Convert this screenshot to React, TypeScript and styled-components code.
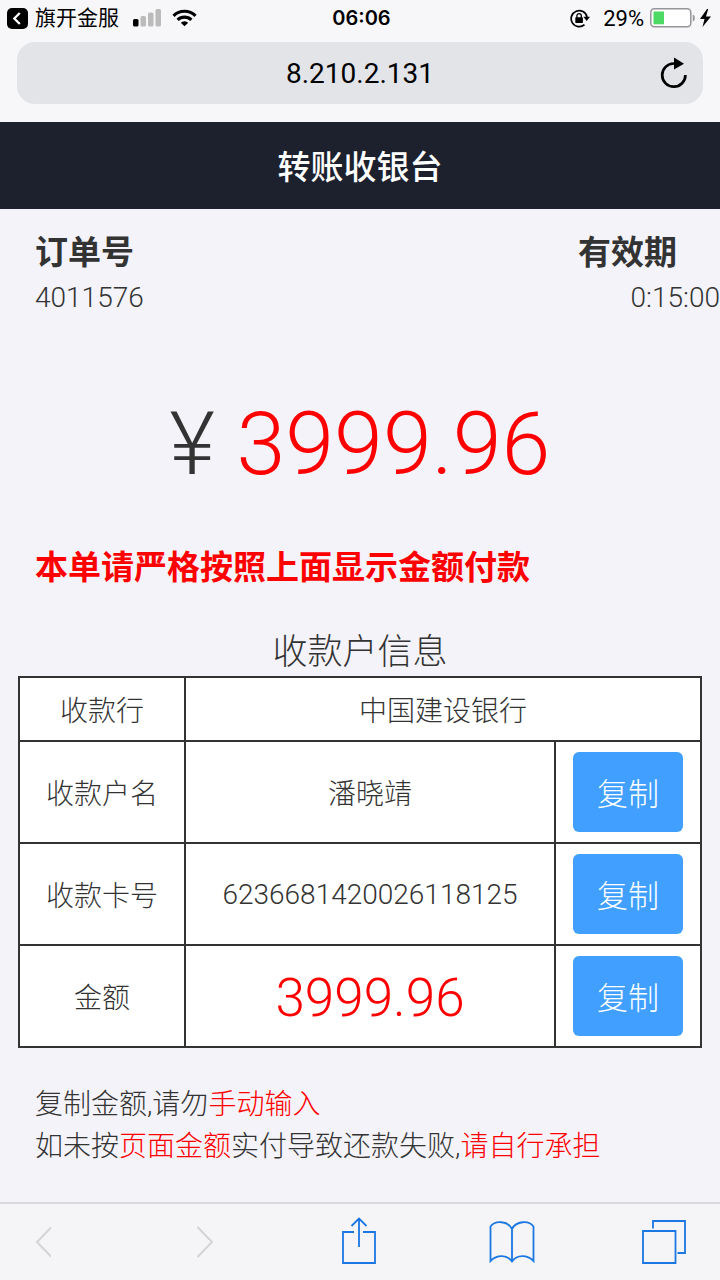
import React from "react";
import styled, { createGlobalStyle } from "styled-components";

const GlobalStyle = createGlobalStyle`
  * { box-sizing: border-box; }
  body {
    margin: 0;
    background: #f4f3f9;
    color: #333;
    font-family: Roboto, "Noto Sans CJK SC", sans-serif;
    font-weight: 300;
  }
  h1, h2, p, dl, dt, dd { margin: 0; }
`;

const Screen = styled.div`
  display: flex;
  flex-direction: column;
  min-height: 100vh;
`;

const BrowserTop = styled.div`
  background: #f7f7f9;
  padding-bottom: 18px;
`;

const StatusBar = styled.div`
  display: grid;
  grid-template-columns: 1fr auto 1fr;
  align-items: center;
  height: 36px;
  padding: 0 8px 0 7px;
  color: #000;
  font-size: 22px;
  font-weight: 400;
`;

const StatusGroup = styled.div<{ $end?: boolean }>`
  display: flex;
  align-items: center;
  justify-content: ${(p) => (p.$end ? "flex-end" : "flex-start")};
`;

const BackApp = styled.a`
  display: flex;
  align-items: center;
  gap: 7px;
  margin-right: 14px;
  color: #000;
  font-size: 21px;
  line-height: 36px;
  text-decoration: none;
`;

const Signal = styled.svg`
  margin-right: 10px;
`;

const Clock = styled.time`
  padding-left: 4px;
  font-family: Inter, sans-serif;
  font-size: 20px;
  font-weight: 600;
`;

const Battery = styled.span`
  margin: 0 6px 0 12px;
`;

const AddressBar = styled.div`
  display: grid;
  grid-template-columns: 44px 1fr 44px;
  align-items: center;
  height: 62px;
  margin: 6px 17px 0;
  padding: 0 7px;
  border-radius: 18px;
  background: #e3e4e8;
  color: #000;
  font-size: 28px;
  font-weight: 400;
  text-align: center;
`;

const IconButton = styled.button`
  display: flex;
  align-items: center;
  justify-content: center;
  padding: 0;
  border: 0;
  background: none;
  color: inherit;
`;

const TitleBar = styled.header`
  background: #1d212e;
  color: #fff;
  text-align: center;
`;

const Title = styled.h1`
  padding-top: 4px;
  font-size: 33px;
  font-weight: 500;
  line-height: 83px;
`;

const Content = styled.main`
  flex: 1;
`;

const OrderSummary = styled.dl`
  display: flex;
  justify-content: space-between;
  padding: 20px 0 0 35px;
`;

const SummaryItem = styled.div<{ $end?: boolean }>`
  text-align: ${(p) => (p.$end ? "right" : "left")};
  dt { padding-right: ${(p) => (p.$end ? "43px" : "0")}; }
`;

const SummaryLabel = styled.dt`
  font-size: 33px;
  font-weight: 700;
  line-height: 48px;
`;

const SummaryValue = styled.dd`
  font-size: 28px;
  line-height: 42px;
`;

const Amount = styled.p`
  margin-top: 70px;
  font-size: 88px;
  line-height: 110px;
  text-align: center;
`;

const Red = styled.span`
  color: #f00;
`;

const Notice = styled.p`
  margin: 45px 35px 0;
  color: #f00;
  font-size: 33px;
  font-weight: 700;
  line-height: 48px;
`;

const Payee = styled.table`
  width: calc(100% - 36px);
  margin: 37px 18px 0;
  border-collapse: collapse;
  table-layout: fixed;
  font-size: 28px;
  text-align: center;
`;

const PayeeCaption = styled.caption`
  font-size: 35px;
  line-height: 47px;
`;

const Row = styled.tr<{ $compact?: boolean }>`
  height: ${(p) => (p.$compact ? "64px" : "102px")};
  background: #fff;
`;

const Label = styled.th`
  padding: 0;
  border: 2px solid #333;
  font-weight: 300;
`;

const Cell = styled.td<{ $large?: boolean }>`
  padding: ${(p) => (p.$large ? "4px 0 0" : "0")};
  border: 2px solid #333;
  color: ${(p) => (p.$large ? "#f00" : "inherit")};
  font-size: ${(p) => (p.$large ? "53px" : "28px")};
`;

const CopyButton = styled.button`
  display: block;
  width: 110px;
  height: 80px;
  margin: 0 auto;
  padding: 0 0 2px;
  border: 0;
  border-radius: 6px;
  background: #409fff;
  color: #fff;
  font: inherit;
  font-size: 31px;
`;

const Hints = styled.div`
  padding: 36px 35px 32px;
  font-size: 28px;
  line-height: 42px;
`;

const Toolbar = styled.nav`
  display: flex;
  align-items: center;
  justify-content: space-between;
  height: 78px;
  padding: 0 33px 0 31px;
  border-top: 2px solid #dadadd;
  background: #f5f5f7;
  color: #1b77e2;
`;

const ToolButton = styled(IconButton)<{ $start?: boolean }>`
  width: 46px;
  justify-content: ${(p) => (p.$start ? "flex-start" : "center")};
`;

const rows = [
  { label: "收款户名", value: "潘晓靖" },
  { label: "收款卡号", value: "6236681420026118125" },
  { label: "金额", value: "3999.96", large: true },
];

export default function App() {
  return (
    <Screen>
      <GlobalStyle />
      <BrowserTop>
        <StatusBar>
          <StatusGroup>
            <BackApp href="#">
              <svg width="21" height="21" viewBox="0 0 21 21">
                <rect width="21" height="21" rx="5" fill="#000" />
                <path d="M12.8 5 7.3 10.500l5.500 5.500" fill="none" stroke="#fff" strokeWidth="2.300" />
              </svg>
              <span>旗开金服</span>
            </BackApp>
            <Signal width="29" height="18" viewBox="0 0 29 18">
              <rect x="0" y="10" width="5.500" height="7.500" rx="1.500" fill="#000" />
              <rect x="7.500" y="7" width="5.500" height="10.500" rx="1.500" fill="#bbb" />
              <rect x="15" y="3.500" width="5.500" height="14" rx="1.500" fill="#bbb" />
              <rect x="22.500" y="0" width="5.500" height="17.500" rx="1.500" fill="#bbb" />
            </Signal>
            <svg width="25" height="18" viewBox="0 0 25 18" fill="none" stroke="#000" strokeWidth="3.200">
              <path d="M1.500 6.800a15.600 15.600 0 0 1 22 0" />
              <path d="M5.600 10.900a9.800 9.800 0 0 1 13.800 0" />
              <path d="M12.500 17.300 8.800 13.700a5.300 5.300 0 0 1 7.400 0z" fill="#000" stroke="none" />
            </svg>
          </StatusGroup>
          <Clock>06:06</Clock>
          <StatusGroup $end>
            <svg width="21" height="19" viewBox="0 0 21 19" fill="none" stroke="#000">
              <path d="M17 8A8 8 0 1 0 14.500 15.600" strokeWidth="1.700" />
              <path d="M13.400 7.700h6.600l-3.300 4.300z" fill="#000" stroke="none" />
              <rect x="5.300" y="8.300" width="7.600" height="5.600" rx="0.600" fill="#000" stroke="none" />
              <path d="M6.900 9V6.800a2.200 2.200 0 0 1 4.400 0V9" strokeWidth="1.300" />
            </svg>
            <Battery>29%</Battery>
            <svg width="46" height="20" viewBox="0 0 46 20">
              <rect x="0.800" y="0.800" width="40" height="18" rx="3.500" fill="#fff" stroke="#96969a" strokeWidth="1.500" />
              <rect x="3.500" y="3.500" width="10.500" height="12.800" fill="#4cd964" />
              <path d="M42.800 6.500c2.700.5 2.700 6.500 0 7z" fill="#96969a" />
            </svg>
            <svg width="16" height="20" viewBox="0 0 16 20">
              <path d="M11 1 4 11h4.500L6.500 19 15 8.500h-5L12.200 1z" fill="#000" />
            </svg>
          </StatusGroup>
        </StatusBar>
        <AddressBar>
          <span />
          <span>8.210.2.131</span>
          <IconButton type="button" aria-label="刷新">
            <svg width="30" height="34" viewBox="0 0 30 34">
              <path d="M26.400 19A11.600 11.600 0 1 1 14.800 7.500H17" fill="none" stroke="#000" strokeWidth="2.700" />
              <path d="M15 1.500v12L25 7.700z" fill="#000" />
            </svg>
          </IconButton>
        </AddressBar>
      </BrowserTop>
      <TitleBar>
        <Title>转账收银台</Title>
      </TitleBar>
      <Content>
        <OrderSummary>
          <SummaryItem>
            <SummaryLabel>订单号</SummaryLabel>
            <SummaryValue>4011576</SummaryValue>
          </SummaryItem>
          <SummaryItem $end>
            <SummaryLabel>有效期</SummaryLabel>
            <SummaryValue>0:15:00</SummaryValue>
          </SummaryItem>
        </OrderSummary>
        <Amount>
          ¥ <Red>3999.96</Red>
        </Amount>
        <Notice>本单请严格按照上面显示金额付款</Notice>
        <Payee>
          <PayeeCaption>收款户信息</PayeeCaption>
          <colgroup>
            <col width="166" />
            <col />
            <col width="146" />
          </colgroup>
          <tbody>
            <Row $compact>
              <Label scope="row">收款行</Label>
              <Cell colSpan={2}>中国建设银行</Cell>
            </Row>
            {rows.map((row) => (
              <Row key={row.label}>
                <Label scope="row">{row.label}</Label>
                <Cell $large={row.large}>{row.value}</Cell>
                <Cell>
                  <CopyButton type="button">复制</CopyButton>
                </Cell>
              </Row>
            ))}
          </tbody>
        </Payee>
        <Hints>
          <p>
            复制金额,请勿<Red>手动输入</Red>
          </p>
          <p>
            如未按<Red>页面金额</Red>实付导致还款失败,<Red>请自行承担</Red>
          </p>
        </Hints>
      </Content>
      <Toolbar aria-label="浏览器工具栏">
        <ToolButton $start type="button" aria-label="后退">
          <svg width="20" height="34" viewBox="0 0 20 34">
            <path d="M20 2.500 6 17l14 14.500" fill="none" stroke="#d4d4d7" strokeWidth="2" strokeLinecap="round" />
          </svg>
        </ToolButton>
        <ToolButton type="button" aria-label="前进">
          <svg width="20" height="34" viewBox="0 0 20 34">
            <path d="M1 2.500 15 17 1 31.500" fill="none" stroke="#d4d4d7" strokeWidth="2" strokeLinecap="round" />
          </svg>
        </ToolButton>
        <ToolButton type="button" aria-label="分享">
          <svg width="34" height="50" viewBox="0 0 34 50" fill="none" stroke="currentColor" strokeWidth="1.800">
            <path d="M12 15H1v31h32V15H21M17 30V1.500M9.500 9 17 1.500 24.500 9" />
          </svg>
        </ToolButton>
        <ToolButton type="button" aria-label="书签">
          <svg width="46" height="44" viewBox="0 0 46 44" fill="none" stroke="currentColor" strokeWidth="1.800">
            <path d="M23 9C19 .8 6 0 1.500 6.500V41C8 34.500 18 34.500 23 41.500 28 34.500 38 34.500 44.500 41V6.500C40 0 27 .8 23 9zV42" />
          </svg>
        </ToolButton>
        <ToolButton type="button" aria-label="标签页">
          <svg width="44" height="44" viewBox="0 0 44 44" fill="none" stroke="currentColor" strokeWidth="1.800">
            <path d="M1 11h32.500v32H1zM11 8.500V1h32v32h-7.500" />
          </svg>
        </ToolButton>
      </Toolbar>
    </Screen>
  );
}
